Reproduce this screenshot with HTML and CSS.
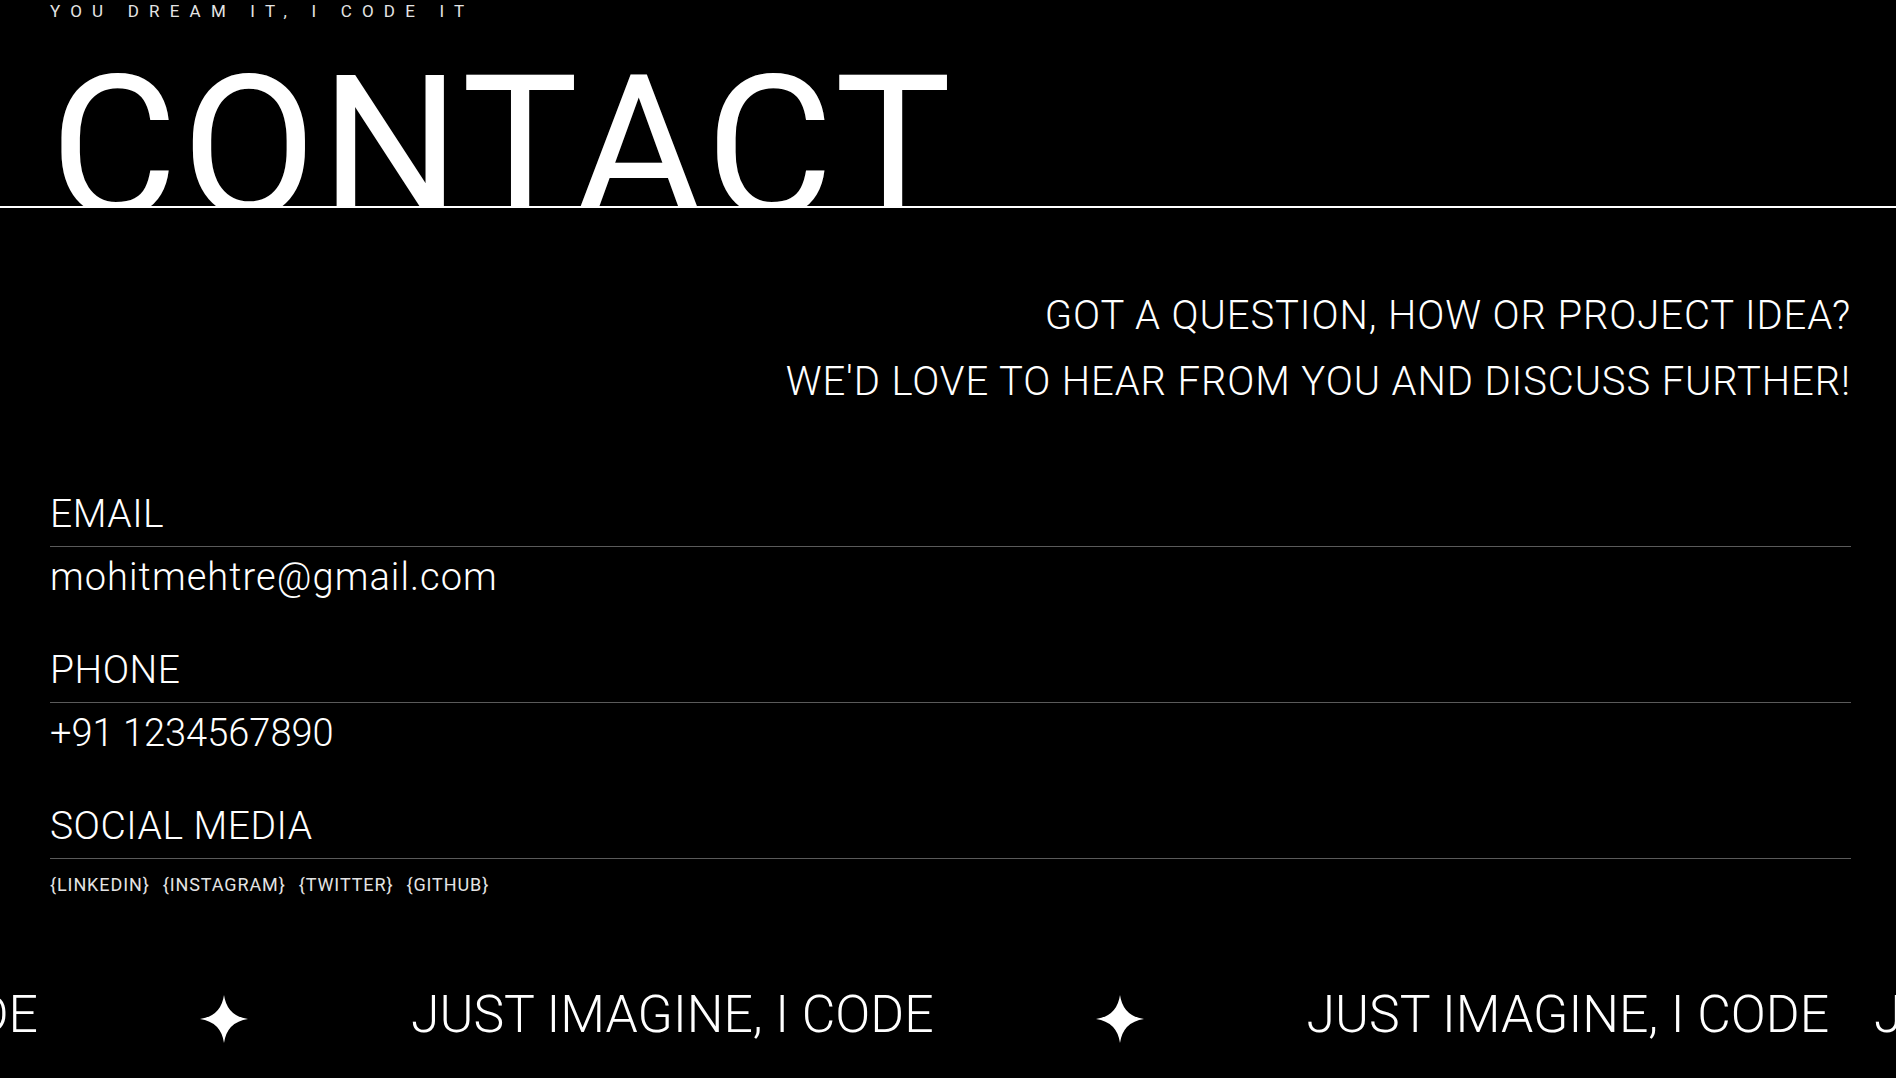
FILE: index.html
```html
<!DOCTYPE html>
<html lang="en">
<head>
<meta charset="utf-8">
<title>Contact</title>
<link rel="stylesheet" href="styles.css">
</head>
<body>
<header class="hero">
  <p class="hero__tagline">YOU DREAM IT, I CODE IT</p>
  <div class="hero__title-wrap">
    <h1 class="hero__title">CONTACT</h1>
  </div>
</header>

<main class="contact">
  <div class="contact__intro">
    <p>GOT A QUESTION, HOW OR PROJECT IDEA?</p>
    <p>WE'D LOVE TO HEAR FROM YOU AND DISCUSS FURTHER!</p>
  </div>

  <section class="contact__list">
    <div class="contact__item">
      <h2 class="contact__label">EMAIL</h2>
      <p class="contact__value contact__value--email">mohitmehtre@gmail.com</p>
    </div>
    <div class="contact__item">
      <h2 class="contact__label">PHONE</h2>
      <p class="contact__value">+91 1234567890</p>
    </div>
    <div class="contact__item">
      <h2 class="contact__label">SOCIAL MEDIA</h2>
      <ul class="contact__socials">
        <li>{LINKEDIN}</li>
        <li>{INSTAGRAM}</li>
        <li>{TWITTER}</li>
        <li>{GITHUB}</li>
      </ul>
    </div>
  </section>
</main>

<footer class="marquee">
  <div class="marquee__track">
    <div class="marquee__lead"><span class="marquee__text">JUST IMAGINE, I CODE</span></div>
    <svg class="marquee__star" viewBox="0 0 48 48" aria-hidden="true"><path d="M24 0 Q27 21 48 24 Q27 27 24 48 Q21 27 0 24 Q21 21 24 0 Z"/></svg>
    <span class="marquee__text">JUST IMAGINE, I CODE</span>
    <svg class="marquee__star" viewBox="0 0 48 48" aria-hidden="true"><path d="M24 0 Q27 21 48 24 Q27 27 24 48 Q21 27 0 24 Q21 21 24 0 Z"/></svg>
    <span class="marquee__text marquee__text--gap">JUST IMAGINE, I CODE</span>
    <span class="marquee__text">JUST IMAGINE, I CODE</span>
  </div>
</footer>
</body>
</html>
```

FILE: styles.css
```css
* { box-sizing: border-box; }

html, body {
  margin: 0;
  padding: 0;
  background: #000;
  color: #fff;
  font-family: Roboto, "Liberation Sans", sans-serif;
  overflow: hidden;
}

p, h1, h2, ul { margin: 0; padding: 0; }

.hero__tagline {
  padding-left: 50px;
  font-size: 17px;
  line-height: 23px;
  letter-spacing: 10.2px;
  font-weight: 400;
  color: #e4e4e4;
  white-space: nowrap;
}

.hero__title-wrap {
  height: 185px;
  padding: 27px 0 0 50px;
  overflow: hidden;
  border-bottom: 2px solid #fff;
}

.hero__title {
  font-size: 196px;
  line-height: 196px;
  font-weight: 400;
  letter-spacing: 4px;
  white-space: nowrap;
}

.contact {
  padding: 0 45px 0 50px;
}

.contact__intro {
  padding: 75px 0 76px;
  text-align: right;
  font-size: 40px;
  line-height: 66px;
  font-weight: 300;
  letter-spacing: 0.9px;
}

.contact__list {
  display: flex;
  flex-direction: column;
  gap: 47px;
}

.contact__label {
  font-size: 39px;
  line-height: 47px;
  font-weight: 300;
  letter-spacing: 0.5px;
  padding-bottom: 8px;
  border-bottom: 1px solid #5a5a5a;
}

.contact__value {
  padding-top: 7px;
  font-size: 38px;
  line-height: 46px;
  font-weight: 300;
}

.contact__value--email {
  letter-spacing: 1.05px;
}

.contact__socials {
  list-style: none;
  display: flex;
  gap: 13px;
  margin-top: 15px;
  font-size: 18px;
  line-height: 22px;
  font-weight: 400;
  letter-spacing: 0.9px;
  color: #e4e4e4;
}

.marquee {
  margin-top: 91px;
  overflow: hidden;
}

.marquee__track {
  display: flex;
  align-items: center;
  white-space: nowrap;
}

.marquee__lead {
  width: 38px;
  flex: none;
  display: flex;
  justify-content: flex-end;
}

.marquee__text {
  flex: none;
  font-size: 51.7px;
  line-height: 52px;
  font-weight: 300;
}

.marquee__text--gap {
  margin-right: 45px;
}

.marquee__star {
  flex: none;
  width: 48px;
  height: 48px;
  margin: 8px 163px 0 162px;
  fill: #fff;
}
```
